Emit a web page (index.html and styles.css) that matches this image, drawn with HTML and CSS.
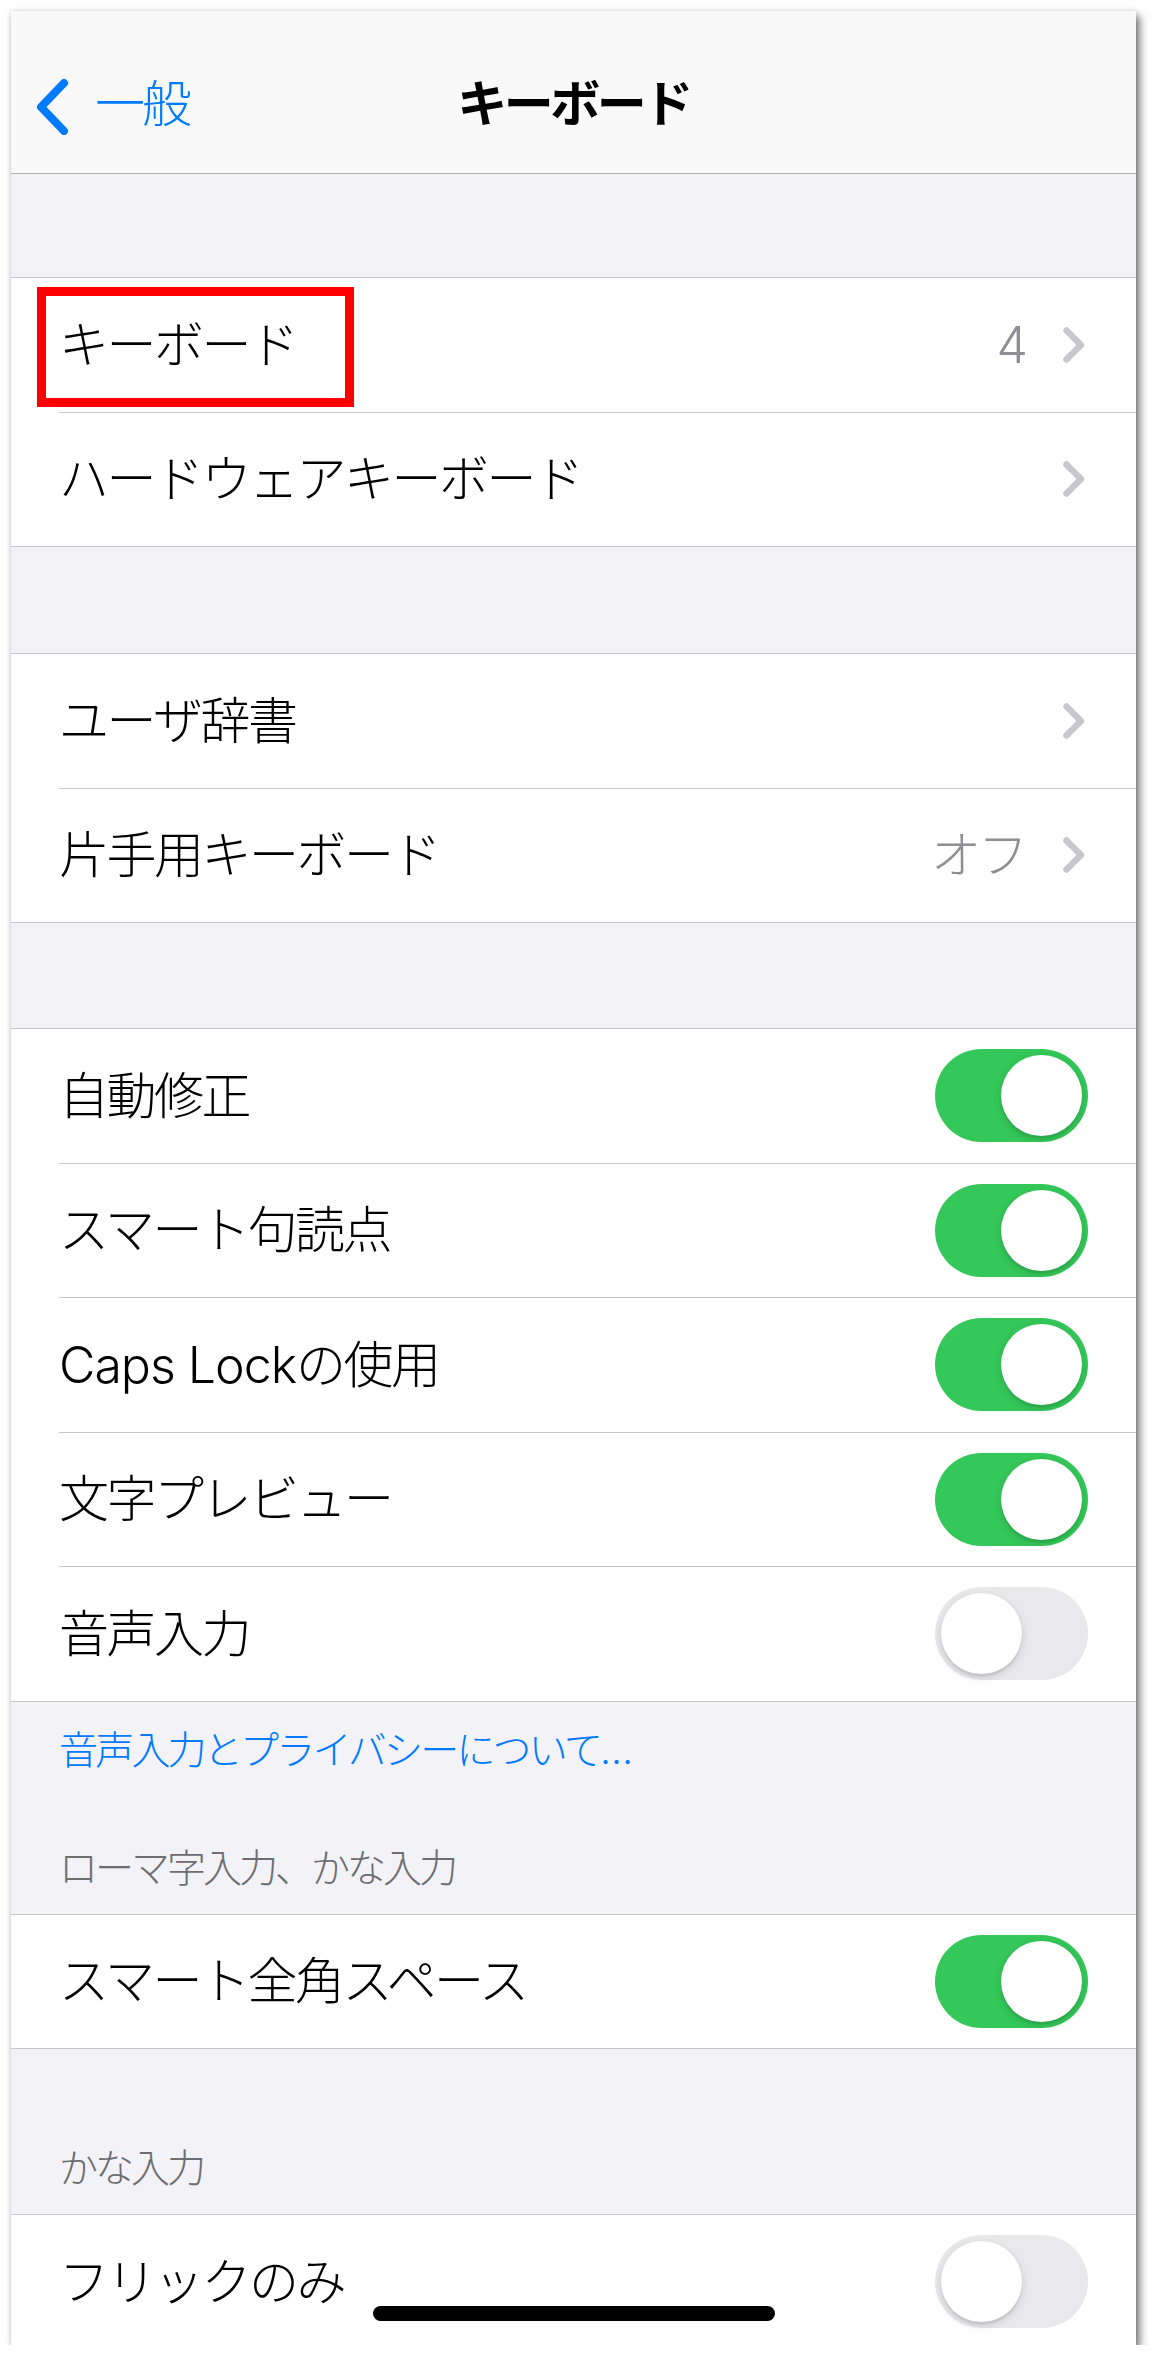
FILE: index.html
```html
<!DOCTYPE html>
<html lang="ja">
<head>
  <meta charset="UTF-8">
  <title>キーボード</title>
  <link rel="stylesheet" href="styles.css">
</head>
<body>
  <div class="screen">
    <header class="nav">
      <div class="nav-bar">
        <a class="back">
          <svg class="back-icon" width="33" height="56" viewBox="0 0 33 56">
            <polyline points="28,4 5,28 28,52" fill="none" stroke="#007aff" stroke-width="8" stroke-linecap="round" stroke-linejoin="round"/>
          </svg>
          <span class="back-text">一般</span>
        </a>
        <h1 class="nav-title">キーボード</h1>
        <div></div>
      </div>
    </header>

    <div class="gap gap-top"></div>

    <div class="group">
      <div class="cell">
        <div class="cell-body">
          <span class="label">キーボード</span>
          <span class="detail">4</span>
          <svg class="chevron" width="22" height="36" viewBox="0 0 22 36"><polyline points="3.5,3.5 18,18 3.5,32.5" fill="none" stroke="#c7c7cc" stroke-width="6.5" stroke-linecap="round" stroke-linejoin="round"/></svg>
        </div>
        <div class="highlight"></div>
      </div>
      <div class="cell">
        <div class="cell-body">
          <span class="label">ハードウェアキーボード</span>
          <svg class="chevron" width="22" height="36" viewBox="0 0 22 36"><polyline points="3.5,3.5 18,18 3.5,32.5" fill="none" stroke="#c7c7cc" stroke-width="6.5" stroke-linecap="round" stroke-linejoin="round"/></svg>
        </div>
      </div>
    </div>

    <div class="gap"></div>

    <div class="group">
      <div class="cell">
        <div class="cell-body">
          <span class="label">ユーザ辞書</span>
          <svg class="chevron" width="22" height="36" viewBox="0 0 22 36"><polyline points="3.5,3.5 18,18 3.5,32.5" fill="none" stroke="#c7c7cc" stroke-width="6.5" stroke-linecap="round" stroke-linejoin="round"/></svg>
        </div>
      </div>
      <div class="cell">
        <div class="cell-body">
          <span class="label">片手用キーボード</span>
          <span class="detail">オフ</span>
          <svg class="chevron" width="22" height="36" viewBox="0 0 22 36"><polyline points="3.5,3.5 18,18 3.5,32.5" fill="none" stroke="#c7c7cc" stroke-width="6.5" stroke-linecap="round" stroke-linejoin="round"/></svg>
        </div>
      </div>
    </div>

    <div class="gap gap-short"></div>

    <div class="group">
      <div class="cell">
        <div class="cell-body toggle-row">
          <span class="label">自動修正</span>
          <span class="switch on"><span class="knob"></span></span>
        </div>
      </div>
      <div class="cell">
        <div class="cell-body toggle-row">
          <span class="label">スマート句読点</span>
          <span class="switch on"><span class="knob"></span></span>
        </div>
      </div>
      <div class="cell">
        <div class="cell-body toggle-row">
          <span class="label"><span class="latin">Caps Lock</span>の使用</span>
          <span class="switch on"><span class="knob"></span></span>
        </div>
      </div>
      <div class="cell">
        <div class="cell-body toggle-row">
          <span class="label">文字プレビュー</span>
          <span class="switch on"><span class="knob"></span></span>
        </div>
      </div>
      <div class="cell">
        <div class="cell-body toggle-row">
          <span class="label">音声入力</span>
          <span class="switch"><span class="knob"></span></span>
        </div>
      </div>
    </div>

    <div class="group-footer"><a class="link">音声入力とプライバシーについて…</a></div>

    <div class="section-header">ローマ字入力、かな入力</div>

    <div class="group">
      <div class="cell">
        <div class="cell-body toggle-row">
          <span class="label">スマート全角スペース</span>
          <span class="switch on"><span class="knob"></span></span>
        </div>
      </div>
    </div>

    <div class="section-header after-group">かな入力</div>

    <div class="group">
      <div class="cell">
        <div class="cell-body toggle-row">
          <span class="label">フリックのみ</span>
          <span class="switch"><span class="knob"></span></span>
        </div>
      </div>
    </div>

    <div class="home-indicator"></div>
  </div>
</body>
</html>
```

FILE: styles.css
```css
body {
  margin: 0;
  padding: 11px 0 0 11px;
  background: #ffffff;
  font-family: Inter, "Noto Sans CJK JP", sans-serif;
}

.screen {
  position: relative;
  width: 1125px;
  height: 2334px;
  overflow: hidden;
  background: #f2f2f7;
  box-shadow: 4px 5px 8px rgba(0, 0, 0, 0.5), 0 0 5px rgba(0, 0, 0, 0.15);
}

/* navigation bar */
.nav {
  height: 163px;
  box-sizing: border-box;
  padding-top: 27px;
  background: #f9f9f9;
  border-bottom: 1px solid #b1b1b3;
}

.nav-bar {
  height: 132px;
  display: grid;
  grid-template-columns: 1fr auto 1fr;
  align-items: center;
}

.back {
  display: flex;
  align-items: center;
  padding-left: 25px;
  color: #007aff;
}

.back-icon {
  margin-top: 6px;
}

.back-text {
  margin-left: 26px;
  font-size: 50px;
  font-weight: 300;
  letter-spacing: -3px;
  line-height: 60px;
}

.nav-title {
  margin: 0;
  font-size: 50px;
  font-weight: bold;
  letter-spacing: -3.5px;
  line-height: 60px;
  color: #000;
}

/* grouped list */
.gap {
  height: 106px;
}

.gap-top {
  height: 103px;
}

.gap-short {
  height: 105px;
}

.group {
  background: #fff;
  border-top: 1px solid #c8c7cc;
  border-bottom: 1px solid #c8c7cc;
}

.cell {
  position: relative;
  padding-left: 48px;
}

.cell-body {
  height: 133.5px;
  display: flex;
  align-items: center;
  padding-right: 51px;
  border-bottom: 1px solid #c8c7cc;
}

.cell:last-child .cell-body {
  border-bottom: none;
}

.toggle-row {
  padding-right: 48px;
}

.label {
  flex: 1;
  font-size: 50px;
  font-weight: 300;
  letter-spacing: -2.5px;
  line-height: 60px;
  color: #000;
  white-space: nowrap;
}

.latin {
  letter-spacing: -1px;
}

.detail {
  margin-right: 38px;
  font-size: 50px;
  font-weight: 300;
  letter-spacing: -3px;
  line-height: 60px;
  color: #8e8e93;
}

.chevron {
  display: block;
}

.highlight {
  position: absolute;
  top: 9px;
  left: 26px;
  width: 317px;
  height: 120px;
  box-sizing: border-box;
  border: 9px solid #ff0000;
}

/* switches */
.switch {
  display: flex;
  width: 153px;
  height: 93px;
  box-sizing: border-box;
  padding: 6px;
  border-radius: 47px;
  background: #e9e9eb;
}

.switch.on {
  justify-content: flex-end;
  background: #34c759;
}

.knob {
  width: 81px;
  height: 81px;
  border-radius: 50%;
  background: #fff;
  box-shadow: 0 3px 8px rgba(0, 0, 0, 0.15), 0 3px 1px rgba(0, 0, 0, 0.06);
}

/* headers and footers */
.group-footer {
  padding: 24px 48px 0;
  font-size: 39px;
  font-weight: 300;
  letter-spacing: -2.8px;
  line-height: 48px;
}

.link {
  color: #007aff;
}

.section-header {
  padding: 70px 48px 22px;
  font-size: 39px;
  font-weight: 300;
  letter-spacing: -3px;
  line-height: 48px;
  color: #6d6d72;
}

.section-header.after-group {
  padding-top: 95px;
}

.home-indicator {
  position: absolute;
  left: 362px;
  bottom: 24px;
  width: 402px;
  height: 15px;
  border-radius: 8px;
  background: #000;
}
```
